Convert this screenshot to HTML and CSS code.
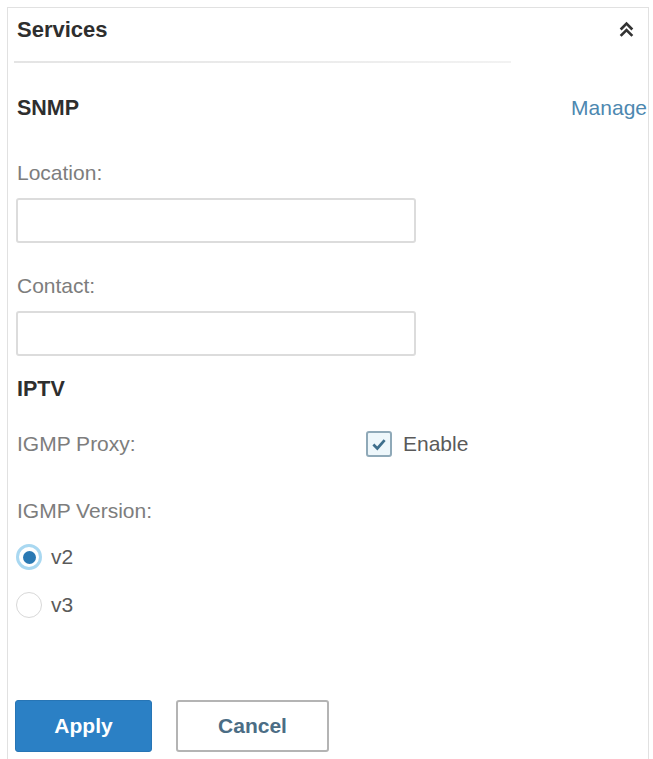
FILE: index.html
```html
<!DOCTYPE html>
<html>
<head>
<meta charset="utf-8">
<link rel="stylesheet" href="styles.css">
</head>
<body>
<div class="card">
  <div class="header">
    <span class="title">Services</span>
    <svg class="chev" width="17" height="17" viewBox="0 0 16 16"><polyline points="2.5,8 8,2.5 13.5,8" fill="none" stroke="#333" stroke-width="2.5"/><polyline points="2.5,14 8,8.5 13.5,14" fill="none" stroke="#333" stroke-width="2.5"/></svg>
  </div>
  <div class="sep"></div>
  <div class="section-row">
    <span class="section">SNMP</span>
    <span class="link">Manage</span>
  </div>
  <div class="label first">Location:</div>
  <div class="input"></div>
  <div class="label">Contact:</div>
  <div class="input"></div>
  <div class="section iptv">IPTV</div>
  <div class="proxy-row">
    <span class="label inline">IGMP Proxy:</span>
    <span class="check-wrap"><span class="checkbox"><svg width="18" height="16" viewBox="0 0 16 14"><polyline points="3,7.5 6.5,11 13,3.5" fill="none" stroke="#3f6f8c" stroke-width="2.4"/></svg></span><span class="opt">Enable</span></span>
  </div>
  <div class="label version">IGMP Version:</div>
  <div class="radio-row r1"><span class="radio on"><span class="dot"></span></span><span class="opt">v2</span></div>
  <div class="radio-row r2"><span class="radio"></span><span class="opt">v3</span></div>
  <div class="buttons">
    <button class="btn apply">Apply</button>
    <button class="btn cancel">Cancel</button>
  </div>
</div>
</body>
</html>
```
FILE: styles.css
```css
html, body {
  margin: 0;
  padding: 0;
  background: #fff;
  overflow: hidden;
  height: 759px;
}
body {
  font-family: "Liberation Sans", Arial, sans-serif;
  color: #333;
}
.card {
  margin: 7px 4px 0 7px;
  border: 1px solid #e1e1e1;
  height: 760px;
  box-sizing: border-box;
  padding: 7px 0 0 8px;
  display: flex;
  flex-direction: column;
}
.header {
  display: flex;
  justify-content: space-between;
  align-items: center;
  height: 30px;
  padding-right: 13px;
  padding-left: 1px;
}
.title {
  font-size: 22px;
  font-weight: bold;
  line-height: 30px;
  color: #2e2e2e;
}
.chev {
  display: block;
  margin-top: -1px;
}
.sep {
  margin-top: 16px;
  height: 2px;
  width: 497px;
  margin-left: -2px;
  background: linear-gradient(to right, #e4e4e4, #ececec 60%, #f2f2f2);
}
.section-row {
  margin-top: 32px;
  display: flex;
  justify-content: space-between;
  align-items: baseline;
  padding-left: 1px;
  padding-right: 1px;
}
.section {
  font-size: 21.5px;
  font-weight: bold;
  line-height: 26px;
  color: #2e2e2e;
}
.link {
  font-size: 21px;
  line-height: 26px;
  color: #4d88b0;
}
.label {
  font-size: 21px;
  line-height: 26px;
  color: #7d7d7d;
  margin-top: 30px;
  padding-left: 1px;
}
.label.first {
  margin-top: 39px;
}
.label.inline {
  margin-top: 0;
  padding-left: 0;
}
.input {
  margin-top: 12px;
  width: 400px;
  height: 45px;
  box-sizing: border-box;
  border: 2px solid #dcdcdc;
  border-radius: 3px;
  background: #fff;
}
.iptv {
  margin-top: 20px;
  padding-left: 1px;
}
.proxy-row {
  margin-top: 29px;
  display: flex;
  align-items: center;
  height: 26px;
  padding-left: 1px;
}
.proxy-row .label {
  width: 349px;
}
.check-wrap {
  display: flex;
  align-items: center;
}
.checkbox {
  width: 26px;
  height: 26px;
  box-sizing: border-box;
  border: 2px solid #8fa9b8;
  border-radius: 3px;
  background: #eef7fb;
  display: flex;
  align-items: center;
  justify-content: center;
}
.opt {
  font-size: 21px;
  line-height: 26px;
  color: #5a5a5a;
  margin-left: 11px;
}
.version {
  margin-top: 41px;
}
.radio-row {
  display: flex;
  align-items: center;
  height: 26px;
}
.radio-row .opt {
  margin-left: 9px;
}
.r1 {
  margin-top: 20px;
}
.r2 {
  margin-top: 22px;
}
.radio {
  width: 26px;
  height: 26px;
  box-sizing: border-box;
  border-radius: 50%;
  border: 1px solid #d8d8d8;
  background: #fff;
  display: flex;
  align-items: center;
  justify-content: center;
}
.radio.on {
  border: 3px solid #a9d8f1;
}
.dot {
  width: 13px;
  height: 13px;
  border-radius: 50%;
  background: #2a79b3;
}
.buttons {
  margin-top: 82px;
  display: flex;
  gap: 24px;
}
.btn {
  font-family: "Liberation Sans", Arial, sans-serif;
  font-size: 21px;
  font-weight: bold;
  height: 52px;
  border-radius: 3px;
  padding: 0;
  box-sizing: border-box;
}
.apply {
  width: 137px;
  background: #2b80c5;
  border: 1px solid #2775b5;
  color: #fff;
  margin-left: -1px;
}
.cancel {
  width: 153px;
  background: #fff;
  border: 2px solid #b4b4b4;
  color: #4b6d85;
}
```
